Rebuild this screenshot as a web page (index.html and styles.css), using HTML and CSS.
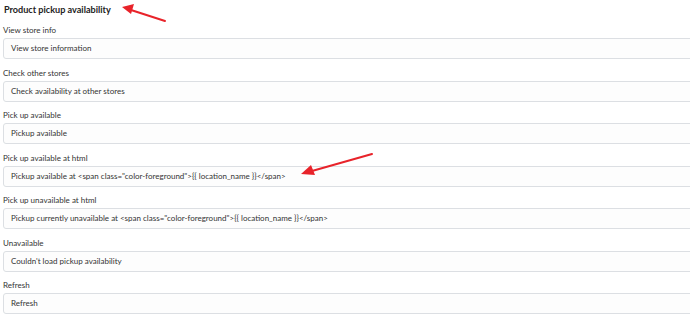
FILE: index.html
```html
<!DOCTYPE html>
<html lang="en">
<head>
  <meta charset="UTF-8" />
  <title>Product pickup availability</title>
  <link rel="stylesheet" href="styles.css">
</head>
<body>

  <!-- heading -->
  <h2 class="section-title">Product pickup availability</h2>

  <div class="fields">
    <div class="field">
      <label>View store info</label>
      <div class="input">View store information</div>
    </div>
    <div class="field">
      <label>Check other stores</label>
      <div class="input">Check availability at other stores</div>
    </div>
    <div class="field">
      <label>Pick up available</label>
      <div class="input">Pickup available</div>
    </div>
    <div class="field">
      <label>Pick up available at html</label>
      <div class="input">Pickup available at &lt;span class="color-foreground"&gt;{{ location_name }}&lt;/span&gt;</div>
    </div>
    <div class="field">
      <label>Pick up unavailable at html</label>
      <div class="input">Pickup currently unavailable at &lt;span class="color-foreground"&gt;{{ location_name }}&lt;/span&gt;</div>
    </div>
    <div class="field">
      <label>Unavailable</label>
      <div class="input">Couldn't load pickup availability</div>
    </div>
    <div class="field">
      <label>Refresh</label>
      <div class="input">Refresh</div>
    </div>
  </div>

  <!-- annotation arrows -->
  <svg class="arrow arrow-title" width="60" height="24" viewBox="0 0 60 24">
    <line x1="46" y1="18" x2="12" y2="7" stroke="#e8232a" stroke-width="2" stroke-linecap="round" />
    <polygon points="3,4 15,1 12,11" fill="#e8232a" />
  </svg>
  <svg class="arrow arrow-html" width="80" height="30" viewBox="0 0 80 30">
    <line x1="74" y1="3" x2="14" y2="20" stroke="#e8232a" stroke-width="2" stroke-linecap="round" />
    <polygon points="3,23 13,14 17,24" fill="#e8232a" />
  </svg>

</body>
</html>
```

FILE: styles.css
```css
body {
  font-family: 'Lato', sans-serif;
  margin: 0;
  padding: 3px 0 0 3px;
  background: #fff;
  color: #303030;
  overflow: hidden;
  position: relative;
  height: 332px;
  box-sizing: border-box;
}

/* heading */
.section-title {
  margin: 0 0 7px 1px;
  font-size: 9.1px;
  font-weight: 700;
  line-height: 14px;
  color: #222;
}

/* fields */
.fields {
  display: flex;
  flex-direction: column;
  gap: 7.5px;
}

.field label {
  display: block;
  font-size: 8px;
  line-height: 12px;
  margin-bottom: 2px;
  color: #333;
}

.input {
  width: 720px;
  height: 21px;
  box-sizing: border-box;
  padding: 0 7px;
  border: 1px solid #dcdfe3;
  border-radius: 3px;
  background: #fdfdfd;
  font-size: 8px;
  line-height: 19px;
  color: #333;
  white-space: nowrap;
}

/* red arrows */
.arrow {
  position: absolute;
}

.arrow-title {
  left: 119px;
  top: 3px;
}

.arrow-html {
  left: 298px;
  top: 151px;
}
```
